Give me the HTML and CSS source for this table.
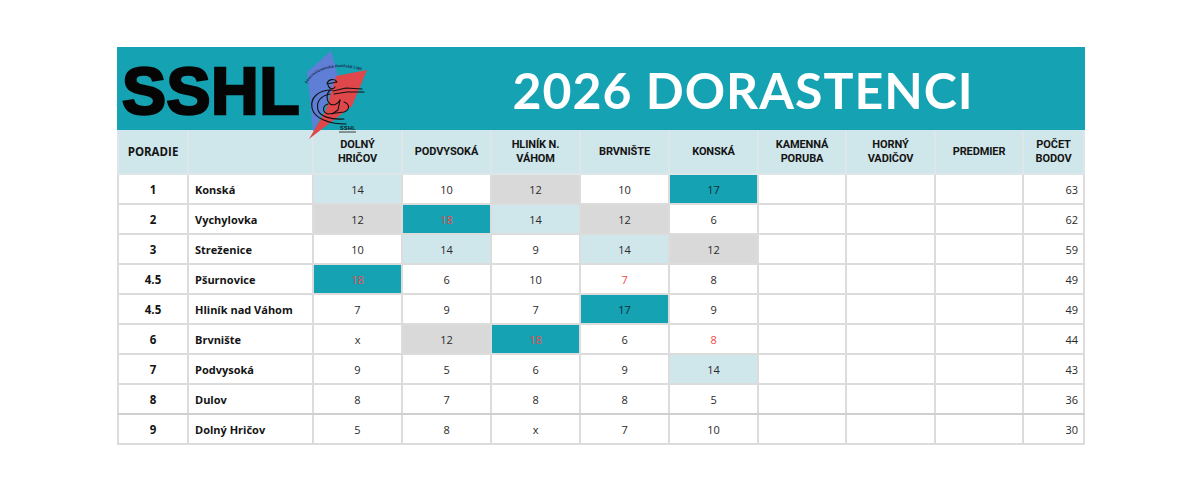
FILE: index.html
```html
<!DOCTYPE html>
<html lang="sk">
<head>
<meta charset="utf-8">
<title>2026 DORASTENCI</title>
<link rel="stylesheet" href="styles.css">
</head>
<body>
<div class="page">
  <table class="board">
    <colgroup>
      <col class="c-rank"><col class="c-name">
      <col class="c-89"><col class="c-89"><col class="c-89"><col class="c-89"><col class="c-89">
      <col class="c-88"><col class="c-89"><col class="c-88"><col class="c-total">
    </colgroup>
    <tr class="band">
      <td colspan="3" class="band-left">
        <span class="brand">SSHL</span>
        <svg class="logo" viewBox="0 0 70 92" width="70" height="92" aria-label="SSHL logo">
          <defs>
            <path id="arc" d="M7 36 C 14 20, 40 14, 68 24"/>
          </defs>
          <path d="M31 3 L38 28 L22 66 L13 84 L10 52 L7 24 Z" fill="#5f7fd6"/>
          <path d="M36 28 L67 22 L52 58 L9 91 L26 62 Z" fill="#df474b"/>
          <text class="arc-text"><textPath href="#arc">Severoslovenská Hasičská Liga</textPath></text>
          <g fill="none" stroke="#111" stroke-width="1.1" stroke-linecap="round" stroke-linejoin="round">
            <path d="M27 36 C28 31, 35 30, 37 34 L27 36 Z"/>
            <path d="M28 37 C29 41, 33 42, 35 39"/>
            <path d="M30 42 C26 46, 26 52, 30 56 C34 58, 38 56, 40 52"/>
            <path d="M33 43 L46 40 L62 41"/>
            <path d="M34 46 L47 44 L64 44"/>
            <path d="M40 52 L38 62 L32 66"/>
            <path d="M28 56 C22 58, 22 64, 28 66 L44 64 C50 62, 50 56, 44 54"/>
            <path d="M32 42 C18 42, 10 50, 12 60 C14 70, 28 76, 46 76"/>
            <path d="M30 46 C20 48, 16 54, 18 62 C20 68, 30 72, 44 71"/>
          </g>
          <text class="mini" x="40" y="82">SSHL</text>
          <path d="M39 84 L56 84" stroke="#111" stroke-width="0.8"/>
        </svg>
      </td>
      <td colspan="8" class="band-title">2026 DORASTENCI</td>
    </tr>
    <tr class="head">
      <th class="rank-h">PORADIE</th>
      <th></th>
      <th>DOLNÝ<br>HRIČOV</th>
      <th>PODVYSOKÁ</th>
      <th>HLINÍK N.<br>VÁHOM</th>
      <th>BRVNIŠTE</th>
      <th>KONSKÁ</th>
      <th>KAMENNÁ<br>PORUBA</th>
      <th>HORNÝ<br>VADIČOV</th>
      <th>PREDMIER</th>
      <th>POČET<br>BODOV</th>
    </tr>
    <tr>
      <td class="rank">1</td><td class="name">Konská</td>
      <td class="light">14</td><td>10</td><td class="gray">12</td><td>10</td><td class="teal">17</td>
      <td></td><td></td><td></td><td class="total">63</td>
    </tr>
    <tr>
      <td class="rank">2</td><td class="name">Vychylovka</td>
      <td class="gray">12</td><td class="teal red">18</td><td class="light">14</td><td class="gray">12</td><td>6</td>
      <td></td><td></td><td></td><td class="total">62</td>
    </tr>
    <tr>
      <td class="rank">3</td><td class="name">Streženice</td>
      <td>10</td><td class="light">14</td><td>9</td><td class="light">14</td><td class="gray">12</td>
      <td></td><td></td><td></td><td class="total">59</td>
    </tr>
    <tr>
      <td class="rank">4.5</td><td class="name">Pšurnovice</td>
      <td class="teal red">18</td><td>6</td><td>10</td><td class="red">7</td><td>8</td>
      <td></td><td></td><td></td><td class="total">49</td>
    </tr>
    <tr>
      <td class="rank">4.5</td><td class="name">Hliník nad Váhom</td>
      <td>7</td><td>9</td><td>7</td><td class="teal">17</td><td>9</td>
      <td></td><td></td><td></td><td class="total">49</td>
    </tr>
    <tr>
      <td class="rank">6</td><td class="name">Brvnište</td>
      <td>x</td><td class="gray">12</td><td class="teal red">18</td><td>6</td><td class="red">8</td>
      <td></td><td></td><td></td><td class="total">44</td>
    </tr>
    <tr>
      <td class="rank">7</td><td class="name">Podvysoká</td>
      <td>9</td><td>5</td><td>6</td><td>9</td><td class="light">14</td>
      <td></td><td></td><td></td><td class="total">43</td>
    </tr>
    <tr class="split">
      <td class="rank">8</td><td class="name">Dulov</td>
      <td>8</td><td>7</td><td>8</td><td>8</td><td>5</td>
      <td></td><td></td><td></td><td class="total">36</td>
    </tr>
    <tr>
      <td class="rank">9</td><td class="name">Dolný Hričov</td>
      <td>5</td><td>8</td><td>x</td><td>7</td><td>10</td>
      <td></td><td></td><td></td><td class="total">30</td>
    </tr>
  </table>
</div>
</body>
</html>
```

FILE: styles.css
```css
html, body {
  margin: 0;
  padding: 0;
  background: #ffffff;
}

.page {
  padding: 47px 0 0 117px;
}

.board {
  border-collapse: collapse;
  table-layout: fixed;
  width: 966px;
  font-family: "Open Sans", "Noto Sans", sans-serif;
  color: #2a2a2a;
}

.c-rank { width: 70px; }
.c-name { width: 125px; }
.c-89 { width: 89px; }
.c-88 { width: 88px; }
.c-total { width: 61px; }

.board td,
.board th {
  border: 2px solid #dcdcdc;
  padding: 0;
  height: 30px;
  box-sizing: border-box;
  text-align: center;
  font-size: 11px;
  font-weight: 400;
  background: #ffffff;
}

/* top band */
.band td {
  height: 81px;
  background: #15a2b3;
  border-color: #15a2b3;
  vertical-align: middle;
}

.band-left {
  position: relative;
  text-align: left !important;
  border-right: 1px solid #2aaebd !important;
}

.brand {
  display: block;
  padding-left: 3px;
  font-family: "Liberation Sans", Arial, sans-serif;
  font-weight: 700;
  font-size: 66px;
  line-height: 1;
  color: #050505;
  -webkit-text-stroke: 2.6px #050505;
  letter-spacing: 0.5px;
  margin-top: 4px;
}

.logo {
  position: absolute;
  left: 181px;
  top: -1px;
  z-index: 2;
  overflow: visible;
}

.arc-text {
  font-family: "Liberation Sans", Arial, sans-serif;
  font-size: 4px;
  font-weight: 700;
  fill: #1d2a55;
}

.mini {
  font-family: "Liberation Sans", Arial, sans-serif;
  font-size: 5.5px;
  font-weight: 700;
  fill: #111;
  letter-spacing: 0.3px;
}

.band-title {
  font-family: "Lato", "Open Sans", sans-serif;
  font-weight: 700 !important;
  font-size: 50px !important;
  letter-spacing: 1px;
  color: #ffffff;
  text-align: center;
  padding-top: 3px !important;
}

/* column header row */
.head th {
  height: 45px;
  background: #cfe6ea;
  border-color: #dde6e8;
  font-family: "Roboto", "Open Sans", sans-serif;
  font-weight: 700;
  font-size: 11px;
  line-height: 14px;
  letter-spacing: -0.1px;
  color: #141414;
}

.head .rank-h {
  font-family: "Open Sans", sans-serif;
  font-size: 11.5px;
  letter-spacing: 0;
}

/* body cells */
.rank {
  font-weight: 700 !important;
  font-size: 11.5px !important;
  color: #141414;
}

.name {
  text-align: left !important;
  padding-left: 6px !important;
  font-weight: 700 !important;
  font-size: 11px !important;
  color: #141414;
}

.total {
  text-align: right !important;
  padding-right: 5px !important;
}

.board td.light { background: #cfe6ea; }
.board td.gray { background: #d9d9d9; }
.board td.teal { background: #15a2b3; color: #0f2b30; }
.board td.red { color: #f24848; }

.split td {
  border-bottom-color: #cfd0d2;
}
```
